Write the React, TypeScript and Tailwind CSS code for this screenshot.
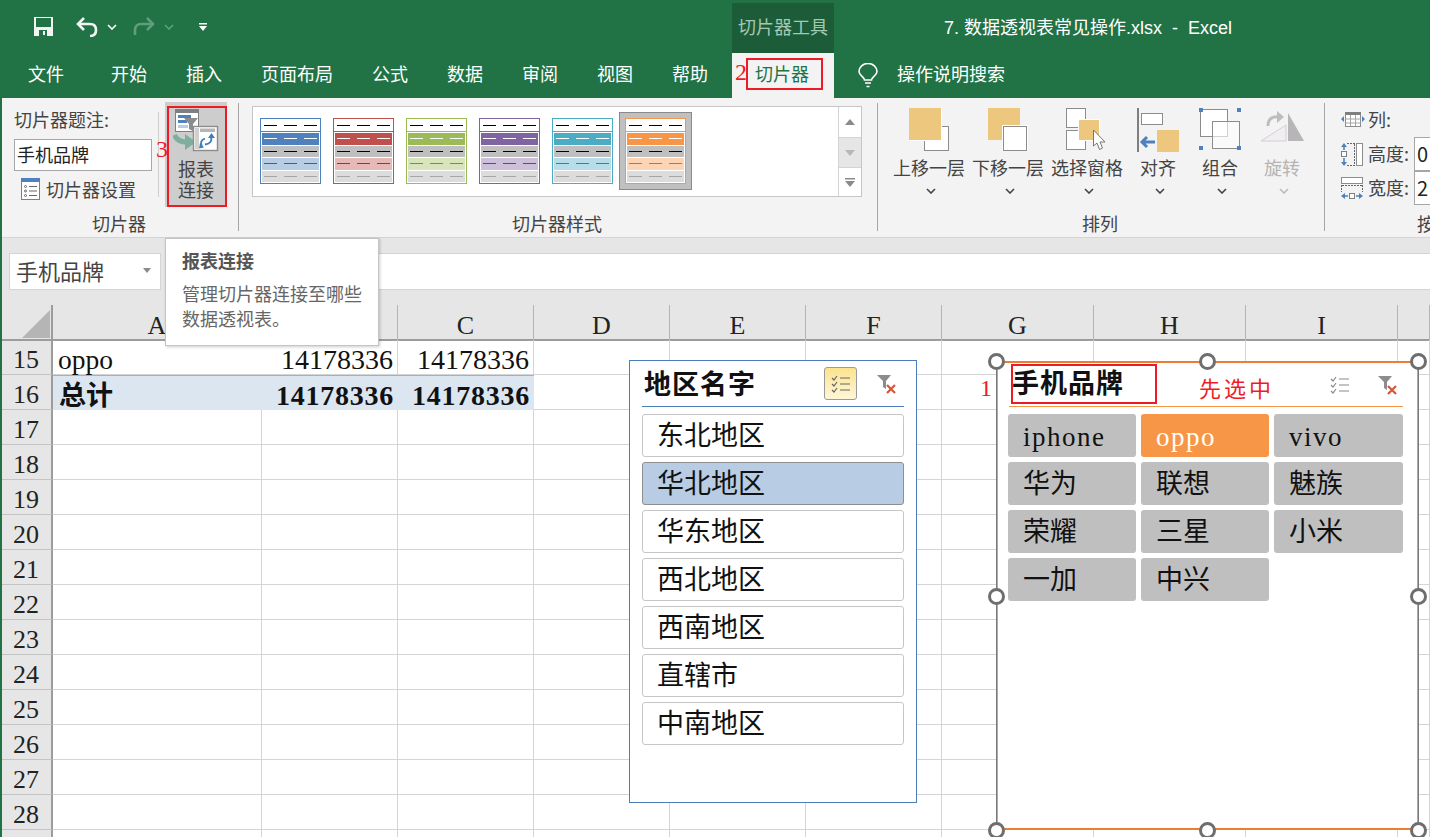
import type { ReactNode } from "react";

const tabs = [
  { label: "开始", w: "w-[75px]" },
  { label: "插入", w: "w-[75px]" },
  { label: "页面布局", w: "w-[111px]" },
  { label: "公式", w: "w-[75px]" },
  { label: "数据", w: "w-[75px]" },
  { label: "审阅", w: "w-[75px]" },
  { label: "视图", w: "w-[75px]" },
  { label: "帮助", w: "w-[75px]" },
];

const swatches = [
  { border: "border-[#4f81bd]", main: "bg-[#4f81bd]", light: "bg-[#b8cce4]", dash: "bg-[#366092]" },
  { border: "border-[#c0504d]", main: "bg-[#c0504d]", light: "bg-[#e6b8b7]", dash: "bg-[#963634]" },
  { border: "border-[#9bbb59]", main: "bg-[#9bbb59]", light: "bg-[#d8e4bc]", dash: "bg-[#76933c]" },
  { border: "border-[#8064a2]", main: "bg-[#8064a2]", light: "bg-[#ccc0da]", dash: "bg-[#60497a]" },
  { border: "border-[#4bacc6]", main: "bg-[#4bacc6]", light: "bg-[#b7dee8]", dash: "bg-[#31869b]" },
];
const orangeSwatch = { border: "border-[#f79646]", main: "bg-[#f79646]", light: "bg-[#fcd5b4]", dash: "bg-[#e26b0a]" };

const columns = ["A", "B", "C", "D", "E", "F", "G", "H", "I", ""];
const rows = [17, 18, 19, 20, 21, 22, 23, 24, 25, 26, 27, 28, 29];
const regions = ["东北地区", "华北地区", "华东地区", "西北地区", "西南地区", "直辖市", "中南地区"];
const brands = [
  { label: "iphone", latin: true },
  { label: "oppo", latin: true, on: true },
  { label: "vivo", latin: true },
  { label: "华为" },
  { label: "联想" },
  { label: "魅族" },
  { label: "荣耀" },
  { label: "三星" },
  { label: "小米" },
  { label: "一加" },
  { label: "中兴" },
];
const handles = [
  "left-[988px] top-[353px]",
  "left-[1199px] top-[353px]",
  "left-[1410px] top-[353px]",
  "left-[988px] top-[588px]",
  "left-[1410px] top-[588px]",
  "left-[988px] top-[822px]",
  "left-[1199px] top-[822px]",
  "left-[1410px] top-[822px]",
];

const sheetGrid =
  "grid grid-cols-[51px_209px_136px_136px_136px_136px_136px_152px_152px_152px_32px]";
const cell = "h-[35px] border-r border-b border-[#d4d4d4]";
const rowHead =
  "flex h-[35px] items-center justify-end border-r-2 border-b border-r-[#9c9c9c] border-b-[#c4c4c4] bg-[#e6e6e6] pr-[12px] pt-[6px] text-[26px] leading-none text-[#222]";
const totalCell =
  "flex h-[35px] items-center justify-end border-t border-[#95b3d7] bg-[#dce6f1] pr-[4px] pt-[6px] text-[28px] leading-none font-bold tracking-[0.75px]";

function Chevron({ className = "stroke-[#444]" }: { className?: string }) {
  return (
    <svg width="10" height="6" viewBox="0 0 10 6" fill="none" className={className}>
      <path d="M1 1l4 4 4-4" strokeWidth="1.6" />
    </svg>
  );
}

function MultiSelectIcon({ stroke = "#777" }: { stroke?: string }) {
  return (
    <svg width="20" height="18" viewBox="0 0 20 18" fill="none" stroke={stroke}>
      <path d="M1 3l2 2 3-4M1 9l2 2 3-4M1 15l2 2 3-4" strokeWidth="1.2" />
      <path d="M9 3h10M9 9h10M9 15h10" strokeWidth="1.2" />
    </svg>
  );
}

function ClearFilterIcon() {
  return (
    <svg width="20" height="20" viewBox="0 0 20 20" fill="none">
      <path d="M0 1h14L9 7v8L6 13V7z" fill="#8c8c8c" />
      <path d="M10 11l8 8M18 11l-8 8" stroke="#d8553a" strokeWidth="2.2" />
    </svg>
  );
}

function ReportConnectIcon() {
  return (
    <svg width="47" height="44" viewBox="0 0 47 44">
      <rect x="2.5" y="0.5" width="23" height="22" fill="#fff" stroke="#7f7f7f" />
      <rect x="2" y="0" width="24" height="4" fill="#7f7f7f" />
      <rect x="5" y="6" width="13" height="3" fill="#4f81bd" />
      <rect x="5" y="11" width="9" height="3" fill="#4f81bd" />
      <rect x="5" y="16" width="10" height="3" fill="#b8cce4" />
      <path d="M11 9h14l-5 6v7l-4-2v-5z" fill="#8c8c8c" />
      <path d="M1.500 26c2 5 6 7 12 7" fill="none" stroke="#7fae9f" strokeWidth="5" />
      <path d="M12 25l11 8-11 8z" fill="#7fae9f" />
      <rect x="20.5" y="17.500" width="24" height="24" fill="#fff" stroke="#8c8c8c" strokeWidth="1.4" />
      <rect x="22" y="19" width="4" height="21" fill="#d0d0d0" />
      <rect x="27" y="19.500" width="15" height="3.500" fill="#b5b5b5" />
      <path d="M38 28c1.500 5-2 7-6 7.500M29 37c-2-3-1-6 3-7.500" fill="none" stroke="#3f7fc0" strokeWidth="1.8" />
      <path d="M35 29l3.500-5 3.500 5zM27 34l4 4.500-5 1z" fill="#3f7fc0" />
    </svg>
  );
}

function SettingsIcon() {
  return (
    <svg width="19" height="22" viewBox="0 0 19 22">
      <rect x="0.5" y="0.5" width="18" height="21" fill="#fff" stroke="#7f7f7f" />
      <rect x="0" y="0" width="19" height="4" fill="#4f81bd" />
      <g fill="none" stroke="#666">
        <path d="M8 8.500h8M8 13h8M8 17.500h8" />
        <circle cx="4.500" cy="8.500" r="1" />
        <circle cx="4.500" cy="13" r="1" />
        <circle cx="4.500" cy="17.500" r="1" />
      </g>
    </svg>
  );
}

function MoveUpIcon() {
  return (
    <svg width="40" height="44" viewBox="0 0 40 44">
      <rect x="15.500" y="18.500" width="24" height="24" fill="#fff" stroke="#8c8c8c" />
      <rect x="0" y="0" width="33" height="33" fill="#fff" />
      <rect x="0" y="0" width="32" height="32" fill="#edc77e" />
    </svg>
  );
}

function MoveDownIcon() {
  return (
    <svg width="40" height="44" viewBox="0 0 40 44">
      <rect x="0" y="0" width="32" height="32" fill="#edc77e" />
      <rect x="14" y="17" width="26" height="26" fill="#fff" />
      <rect x="15.500" y="18.500" width="23" height="24" fill="#fff" stroke="#8c8c8c" />
    </svg>
  );
}

function SelectionPaneIcon() {
  return (
    <svg width="42" height="44" viewBox="0 0 42 44">
      <rect x="0.500" y="0.500" width="19" height="19" fill="#fff" stroke="#8c8c8c" />
      <rect x="0.500" y="22.500" width="19" height="19" fill="#fff" stroke="#8c8c8c" />
      <rect x="12" y="11" width="22" height="22" fill="#fff" />
      <rect x="13" y="12" width="20" height="20" fill="#edc77e" />
      <path d="M27.500 22v16l3.500-3 2.500 6.500 3-1.500-2.500-6h5z" fill="#fff" stroke="#777" />
    </svg>
  );
}

function AlignIcon() {
  return (
    <svg width="42" height="44" viewBox="0 0 42 44">
      <rect x="0" y="0" width="2" height="44" fill="#7f7f7f" />
      <rect x="4.500" y="5.500" width="21" height="11" fill="#fff" stroke="#8c8c8c" />
      <path d="M5 34h13M10 29l-5 5 5 5" fill="none" stroke="#4f81bd" strokeWidth="3" />
      <rect x="20" y="22" width="22" height="22" fill="#edc77e" />
    </svg>
  );
}

function GroupIcon() {
  return (
    <svg width="42" height="44" viewBox="0 0 42 44">
      <rect x="1.500" y="1.500" width="27" height="27" fill="#fff" stroke="#8c8c8c" />
      <rect x="13.500" y="13.500" width="27" height="27" fill="#fff" fillOpacity="0.6" stroke="#8c8c8c" />
      <g fill="#4f81bd">
        <rect x="0" y="0" width="4" height="4" />
        <rect x="38" y="0" width="4" height="4" />
        <rect x="0" y="38" width="4" height="4" />
        <rect x="38" y="38" width="4" height="4" />
      </g>
    </svg>
  );
}

function RotateIcon() {
  return (
    <svg width="44" height="44" viewBox="0 0 44 44">
      <path d="M28 5v28h16z" fill="#b7b5b7" />
      <path d="M1 33h25V17z" fill="#f1eef1" stroke="#d2d0d2" />
      <path d="M8 18c0-8 5-10 12-9" fill="none" stroke="#bdbdbd" strokeWidth="3" />
      <path d="M17 3l7 6-7 6z" fill="#bdbdbd" />
    </svg>
  );
}

function ColumnsIcon() {
  return (
    <svg width="24" height="16" viewBox="0 0 24 16">
      <rect x="4.500" y="1.500" width="15" height="14" fill="#fff" stroke="#8c8c8c" />
      <rect x="4" y="1" width="16" height="3" fill="#7f7f7f" />
      <path d="M4.500 8h15M4.500 12h15M9.500 4v11M14.500 4v11" stroke="#a6a6a6" />
      <path d="M3 5v6L0 8zM21 5v6l3-3z" fill="#4f81bd" />
    </svg>
  );
}

function HeightIcon() {
  return (
    <svg width="22" height="23" viewBox="0 0 22 23">
      <rect x="15.500" y="0.500" width="6" height="22" fill="#fff" stroke="#8c8c8c" />
      <path d="M6 .5h8M6 22.500h8M13.500 1v21" fill="none" stroke="#666" strokeDasharray="2 1" />
      <rect x="0.500" y="8.500" width="5" height="5" fill="#fff" stroke="#7f7f7f" />
      <path d="M3 2v5M3 15v6" stroke="#4f81bd" strokeWidth="1.6" />
      <path d="M0 4l3-4 3 4zM0 19l3 4 3-4z" fill="#4f81bd" />
    </svg>
  );
}

function WidthIcon() {
  return (
    <svg width="22" height="23" viewBox="0 0 22 23">
      <rect x="0.500" y="0.500" width="21" height="6" fill="#fff" stroke="#8c8c8c" />
      <path d="M.5 8v7M21.500 8v7M1 8.500h20" fill="none" stroke="#666" strokeDasharray="2 1" />
      <rect x="8.500" y="16.500" width="5" height="5" fill="#fff" stroke="#7f7f7f" />
      <path d="M2 19h5M15 19h5" stroke="#4f81bd" strokeWidth="1.6" />
      <path d="M4 16l-4 3 4 3zM18 16l4 3-4 3z" fill="#4f81bd" />
    </svg>
  );
}

function Swatch({ border, main, light, dash }: (typeof swatches)[number]) {
  const bars = [
    { bg: main, line: "bg-white" },
    { bg: "bg-[#bfbfbf]", line: "bg-black" },
    { bg: light, line: dash },
    { bg: "bg-[#dcdcdc]", line: "bg-[#a6a6a6]" },
  ];
  return (
    <div className={`flex h-[66px] w-[61px] flex-col border bg-white ${border}`}>
      <div className={`flex h-[13px] shrink-0 items-center justify-between border-b px-[3px] ${border}`}>
        <span className="h-px w-[13px] bg-black" />
        <span className="h-px w-[13px] bg-black" />
        <span className="h-px w-[13px] bg-black" />
      </div>
      <div className="flex flex-1 flex-col gap-px p-px">
        {bars.map((bar, i) => (
          <div key={i} className={`flex flex-1 items-center justify-between px-[2px] ${bar.bg}`}>
            <span className={`h-px w-[13px] ${bar.line}`} />
            <span className={`h-px w-[13px] ${bar.line}`} />
            <span className={`h-px w-[13px] ${bar.line}`} />
          </div>
        ))}
      </div>
    </div>
  );
}

function RibbonGroup({
  label,
  width,
  children,
}: {
  label: string;
  width: string;
  children: ReactNode;
}) {
  return (
    <div className={`flex shrink-0 flex-col ${width}`}>
      <div className="flex h-[113px]">{children}</div>
      <div className="h-[24px] pr-[2px] text-center leading-[24px]">{label}</div>
    </div>
  );
}

function Divider() {
  return <div className="mt-[5px] h-[128px] w-px shrink-0 bg-[#a6a6a6]" />;
}

function ArrangeButton({
  label,
  width,
  icon,
  disabled,
}: {
  label: string;
  width: string;
  icon: ReactNode;
  disabled?: boolean;
}) {
  return (
    <div className={`flex flex-col items-center ${width}`}>
      <div className="flex h-[46px] items-start justify-center">{icon}</div>
      <div className={`mt-[1px] whitespace-nowrap leading-[24px] ${disabled ? "text-[#b4b4b4]" : ""}`}>
        {label}
      </div>
      <div className="ml-[4px] mt-[9px] flex">
        <Chevron className={disabled ? "stroke-[#bbb]" : "stroke-[#444]"} />
      </div>
    </div>
  );
}

function SizeField({ label, value, icon }: { label: string; value: string; icon: ReactNode }) {
  return (
    <div className="flex h-[34px] items-center">
      <div className="flex w-[27px]">{icon}</div>
      <span className="w-[46px] pb-[2px]">{label}</span>
      <div className="h-[34px] w-[40px] shrink-0 border border-[#a6a6a6] bg-white pl-[2px] text-[20px] leading-[32px] text-[#222]">
        {value}
      </div>
    </div>
  );
}

function SlicerItemText({ children }: { children: ReactNode }) {
  return <span className="text-[27px] leading-none">{children}</span>;
}

export default function App() {
  return (
    <div className="relative h-[837px] w-[1430px] overflow-hidden bg-[#217346] pl-[2px] font-['Noto_Sans_CJK_SC','Noto_Sans',sans-serif] text-[18px] text-[#444]">
      {/* title bar */}
      <div className="flex h-[53px]">
        <div className="flex w-[730px] items-center pl-[32px]">
          <svg width="19" height="19" viewBox="0 0 19 19">
            <path
              fillRule="evenodd"
              fill="#f3f3f3"
              d="M0 0h19v19H0zM2 1v9h15V1zM5 13v6h8v-6zM9 14h2v4H9z"
            />
          </svg>
          <svg width="22" height="20" viewBox="0 0 22 20" fill="none" stroke="#f3f3f3" className="ml-[23px]">
            <path d="M2 7h12c4 0 6 2.500 6 6s-2 6-6 6" strokeWidth="2.6" />
            <path d="M8 1L2 7l6 6" strokeWidth="2.6" />
          </svg>
          <Chevron className="ml-[9px] stroke-white" />
          <svg width="22" height="20" viewBox="0 0 22 20" fill="none" stroke="#5e9e7c" className="ml-[16px]">
            <path d="M20 7H8c-4 0-6 2.500-6 6v5" strokeWidth="2.6" />
            <path d="M14 1l6 6-6 6" strokeWidth="2.6" />
          </svg>
          <Chevron className="ml-[9px] stroke-[#5e9e7c]" />
          <svg width="8" height="9" viewBox="0 0 8 9" className="ml-[25px] mt-[2px]">
            <path d="M0 0h8v1.500H0zM0 3h8L4 8z" fill="#fff" />
          </svg>
        </div>
        <div className="mt-[3px] flex w-[102px] items-center justify-center bg-[#1c5c38] pb-[4px] text-[#a3c9b2]">
          切片器工具
        </div>
        <div className="ml-[110px] flex items-center whitespace-pre pt-[4px] font-['Liberation_Sans','Noto_Sans_CJK_SC',sans-serif] text-white">
          7. 数据透视表常见操作.xlsx  -  Excel
        </div>
      </div>

      {/* tabs */}
      <div className="flex h-[45px] text-white">
        <div className="flex w-[89.5px] items-center pb-[4px] pl-[26px]">文件</div>
        {tabs.map((tab) => (
          <div key={tab.label} className={`flex items-center justify-center pb-[4px] ${tab.w}`}>
            {tab.label}
          </div>
        ))}
        <div className="ml-[4.500px] flex w-[102px] items-center justify-center bg-[#f3f3f3] pb-[4px] pr-[2px] text-[#217346]">
          切片器
        </div>
        <svg width="20" height="25" viewBox="0 0 20 25" fill="none" stroke="#fff" strokeWidth="1.6" className="my-auto ml-[24px] mt-[10px]">
          <path d="M6.500 17c0-3-5.500-4.500-5.500-8.500a9 8 0 0 1 18 0c0 4-5.500 5.500-5.500 8.500z" />
          <path d="M7 20h6M8.500 23.500h3" />
        </svg>
        <div className="ml-[19px] flex items-center pb-[4px]">操作说明搜索</div>
      </div>

      {/* ribbon */}
      <div className="flex h-[140px] border-b border-[#d4d4d4] bg-[#f3f3f3]">
        <RibbonGroup label="切片器" width="w-[236px]">
          <div className="ml-[12px] w-[138px] pt-[9px]">
            <div className="h-[24px] leading-[24px]">切片器题注:</div>
            <div className="mt-[8px] flex h-[32px] items-center border border-[#a6a6a6] bg-white pb-[2px] pl-[2px] text-[#222]">
              手机品牌
            </div>
            <div className="mt-[7px] flex h-[22px] items-center gap-[6px] pl-[7px]">
              <SettingsIcon />
              <span>切片器设置</span>
            </div>
          </div>
          <div className="ml-[6px] mt-[14px] h-[85px] w-px bg-[#cfcfcf]" />
          <div className="ml-[6px] mt-[4px] flex h-[105px] w-[62px] flex-col items-center bg-[#cdcdcd] pt-[7px]">
            <ReportConnectIcon />
            <div className="mt-[5px] text-center leading-[21px]">
              报表
              <br />
              连接
            </div>
          </div>
        </RibbonGroup>
        <Divider />
        <RibbonGroup label="切片器样式" width="w-[638px]">
          <div className="ml-[13px] mt-[8px] flex h-[91px] w-[610px] border border-[#c6c6c6] bg-white pl-[7px] pt-[11px]">
            <div className="flex items-start gap-[12px]">
              {swatches.map((swatch) => (
                <Swatch key={swatch.main} {...swatch} />
              ))}
            </div>
            <div className="-mt-[6px] ml-[6px] h-[78px] border border-[#8a8a8a] bg-[#c0c0c0] p-[5px]">
              <Swatch {...orangeSwatch} />
            </div>
            <div className="-mt-[11px] ml-auto flex w-[23px] flex-col border-l border-[#d4d4d4]">
              <div className="flex h-[31px] items-center justify-center border-b border-[#d4d4d4]">
                <svg width="10" height="6" viewBox="0 0 10 6">
                  <path d="M5 0l5 6H0z" fill="#8a8a8a" />
                </svg>
              </div>
              <div className="flex h-[29px] items-center justify-center bg-[#e6e6e6]">
                <svg width="10" height="6" viewBox="0 0 10 6">
                  <path d="M5 6l5-6H0z" fill="#b8b8b8" />
                </svg>
              </div>
              <div className="flex flex-1 items-center justify-center border-t border-[#d4d4d4]">
                <svg width="10" height="9" viewBox="0 0 10 9">
                  <path d="M0 0h10v1.500H0zM0 3h10L5 9z" fill="#8a8a8a" />
                </svg>
              </div>
            </div>
          </div>
        </RibbonGroup>
        <Divider />
        <RibbonGroup label="排列" width="w-[446px]">
          <div className="flex pl-[15px] pt-[10px]">
            <ArrangeButton label="上移一层" width="w-[72px]" icon={<MoveUpIcon />} />
            <ArrangeButton label="下移一层" width="ml-[7px] w-[72px]" icon={<MoveDownIcon />} />
            <ArrangeButton label="选择窗格" width="ml-[7px] w-[72px]" icon={<SelectionPaneIcon />} />
            <ArrangeButton label="对齐" width="ml-[7px] w-[56px]" icon={<AlignIcon />} />
            <ArrangeButton label="组合" width="ml-[6px] w-[56px]" icon={<GroupIcon />} />
            <ArrangeButton label="旋转" width="ml-[6px] w-[56px]" icon={<RotateIcon />} disabled />
          </div>
        </RibbonGroup>
        <Divider />
        <div className="flex shrink-0 flex-col">
          <div className="h-[113px] pl-[16px] pt-[9px]">
            <div className="flex h-[24px] items-center">
              <div className="flex w-[27px]">
                <ColumnsIcon />
              </div>
              <span>列:</span>
            </div>
            <div className="mt-[6px]">
              <SizeField label="高度:" value="0" icon={<HeightIcon />} />
              <SizeField label="宽度:" value="2" icon={<WidthIcon />} />
            </div>
          </div>
          <div className="ml-[92px] h-[24px] whitespace-nowrap leading-[24px]">按钮</div>
        </div>
      </div>

      {/* name box + formula bar */}
      <div className="bg-[#e6e6e6] pt-[15px]">
        <div className="flex h-[37px] pl-[7px]">
          <div className="flex w-[152px] items-center justify-between border border-[#d4d4d4] bg-white pb-[3px] pl-[6px] pr-[9px] text-[22px] text-[#444]">
            手机品牌
            <svg width="8" height="5" viewBox="0 0 8 5">
              <path d="M0 0h8L4 5z" fill="#8a8a8a" />
            </svg>
          </div>
          <div className="ml-[4px] flex-1 border-y border-[#d4d4d4] bg-white" />
        </div>
        <div className="h-[15px]" />
      </div>

      {/* sheet */}
      <div className="font-['Liberation_Serif','Noto_Sans_CJK_SC',serif] text-[#111]">
        <div className={`${sheetGrid} h-[35px] bg-[#e6e6e6]`}>
          <div className="relative border-r-2 border-b-2 border-[#9c9c9c]">
            <svg width="28" height="28" viewBox="0 0 28 28" className="absolute left-[20px] top-[5px]">
              <path d="M28 0v28H0z" fill="#b5b5b5" />
            </svg>
          </div>
          {columns.map((col, i) => (
            <div
              key={i}
              className="flex items-center justify-center border-r border-b-2 border-r-[#b4b4b4] border-b-[#9c9c9c] pt-[8px] text-[26px] leading-none text-[#222]"
            >
              {col}
            </div>
          ))}
        </div>

        <div className={`${sheetGrid} bg-white`}>
          {/* row 15 */}
          <div className={rowHead}>15</div>
          <div className="flex h-[35px] items-center border-b border-[#d4d4d4] pl-[5px] pt-[6px] text-[27.5px] leading-none">oppo</div>
          <div className={`${cell} flex items-center justify-end pr-[4px] pt-[6px] text-[28px] leading-none`}>14178336</div>
          <div className={`${cell} flex items-center justify-end pr-[4px] pt-[6px] text-[28px] leading-none`}>14178336</div>
          {columns.slice(3).map((_, i) => (
            <div key={i} className={cell} />
          ))}

          {/* row 16 */}
          <div className={rowHead}>16</div>
          <div className={`${totalCell} justify-start pl-[6px]`}>
            <span className="text-[27px] tracking-[0px]">总计</span>
          </div>
          <div className={totalCell}>14178336</div>
          <div className={totalCell}>14178336</div>
          {columns.slice(3).map((_, i) => (
            <div key={i} className={cell} />
          ))}

          {rows.map((row) => (
            <div key={row} className="contents">
              <div className={rowHead}>{row}</div>
              {columns.map((_, i) => (
                <div key={i} className={cell} />
              ))}
            </div>
          ))}
        </div>
      </div>

      {/* tooltip */}
      <div className="absolute left-[165px] top-[238px] h-[108px] w-[214px] border border-[#c4c4c4] bg-white pl-[16px] pt-[9px] shadow-[1px_1px_3px_rgba(0,0,0,0.2)]">
        <div className="leading-[24px] font-bold text-[#555]">报表连接</div>
        <div className="mt-[9px] leading-[25px] text-[#666]">
          管理切片器连接至哪些
          <br />
          数据透视表。
        </div>
      </div>

      {/* region slicer */}
      <div className="absolute left-[629px] top-[360px] h-[443px] w-[288px] border border-[#4a7ebb] bg-white px-[12px] font-['Liberation_Serif','Noto_Sans_CJK_SC',serif] text-[#111]">
        <div className="flex h-[46px] items-center border-b border-[#4a7ebb] pl-[2px] pr-[7px]">
          <span className="pt-[4px] text-[27px] font-bold tracking-[1px]">地区名字</span>
          <div className="ml-auto flex h-[33px] w-[33px] items-center justify-center rounded-[3px] border border-[#9a9a9a] bg-gradient-to-b from-[#fbe38e] to-[#fff6d8]">
            <MultiSelectIcon stroke="#666" />
          </div>
          <div className="ml-[20px]">
            <ClearFilterIcon />
          </div>
        </div>
        <div className="mt-[7px] flex flex-col gap-[5px]">
          {regions.map((region) => (
            <div
              key={region}
              className={`flex h-[43px] items-center rounded-[3px] border pl-[14px] pt-[2px] ${
                region === "华北地区" ? "border-[#8f8f8f] bg-[#b8cce4]" : "border-[#c6c6c6] bg-white"
              }`}
            >
              <SlicerItemText>{region}</SlicerItemText>
            </div>
          ))}
        </div>
      </div>

      {/* brand slicer */}
      <div className="absolute left-[996px] top-[361px] h-[469px] w-[423px] border-x border-y-2 border-x-[#7a7a7a] border-y-[#ed7d31] bg-white px-[11px] font-['Liberation_Serif','Noto_Sans_CJK_SC',serif] text-[#111] shadow-[inset_1px_0_0_#f79646,inset_-1px_0_0_#f79646]">
        <div className="ml-[1px] mr-[4px] flex h-[44px] items-center border-b border-[#f79646] pl-[3px] pr-[5px]">
          <span className="text-[27px] font-bold tracking-[1px]">手机品牌</span>
          <div className="ml-auto">
            <MultiSelectIcon stroke="#8a8a8a" />
          </div>
          <div className="ml-[28px]">
            <ClearFilterIcon />
          </div>
        </div>
        <div className="mt-[7px] grid grid-cols-[128px_128px_129px] gap-x-[5px] gap-y-[5px]">
          {brands.map((brand) => (
            <div
              key={brand.label}
              className={`flex h-[43px] items-center rounded-[3px] pl-[15px] ${brand.latin ? "pt-[4px]" : "pt-[2px]"} ${
                brand.on ? "bg-[#f79646] text-white" : "bg-[#bfbfbf]"
              } ${brand.latin ? "tracking-[1.5px]" : ""}`}
            >
              <SlicerItemText>{brand.label}</SlicerItemText>
            </div>
          ))}
        </div>
      </div>
      {handles.map((pos) => (
        <div
          key={pos}
          className={`absolute h-[17px] w-[17px] rounded-full border-[3px] border-[#6e6e6e] bg-white ${pos}`}
        />
      ))}

      {/* red annotations */}
      <div className="font-['Liberation_Serif','Noto_Sans_CJK_SC',serif] text-[#ed1c24]">
        <div className="absolute left-[746px] top-[58px] h-[32px] w-[77px] border-2 border-[#ed1c24]" />
        <span className="absolute left-[735px] top-[60px] text-[24px] leading-[24px]">2</span>
        <div className="absolute left-[167px] top-[106px] h-[101px] w-[60px] border-2 border-[#ed1c24]" />
        <span className="absolute left-[156px] top-[137px] text-[24px] leading-[24px]">3</span>
        <div className="absolute left-[1011px] top-[364px] h-[40px] w-[146px] border-2 border-[#ed1c24]" />
        <span className="absolute left-[980px] top-[376px] text-[24px] leading-[24px]">1</span>
        <span className="absolute left-[1199px] top-[378px] text-[22px] leading-[24px] tracking-[3px]">先选中</span>
      </div>
    </div>
  );
}
